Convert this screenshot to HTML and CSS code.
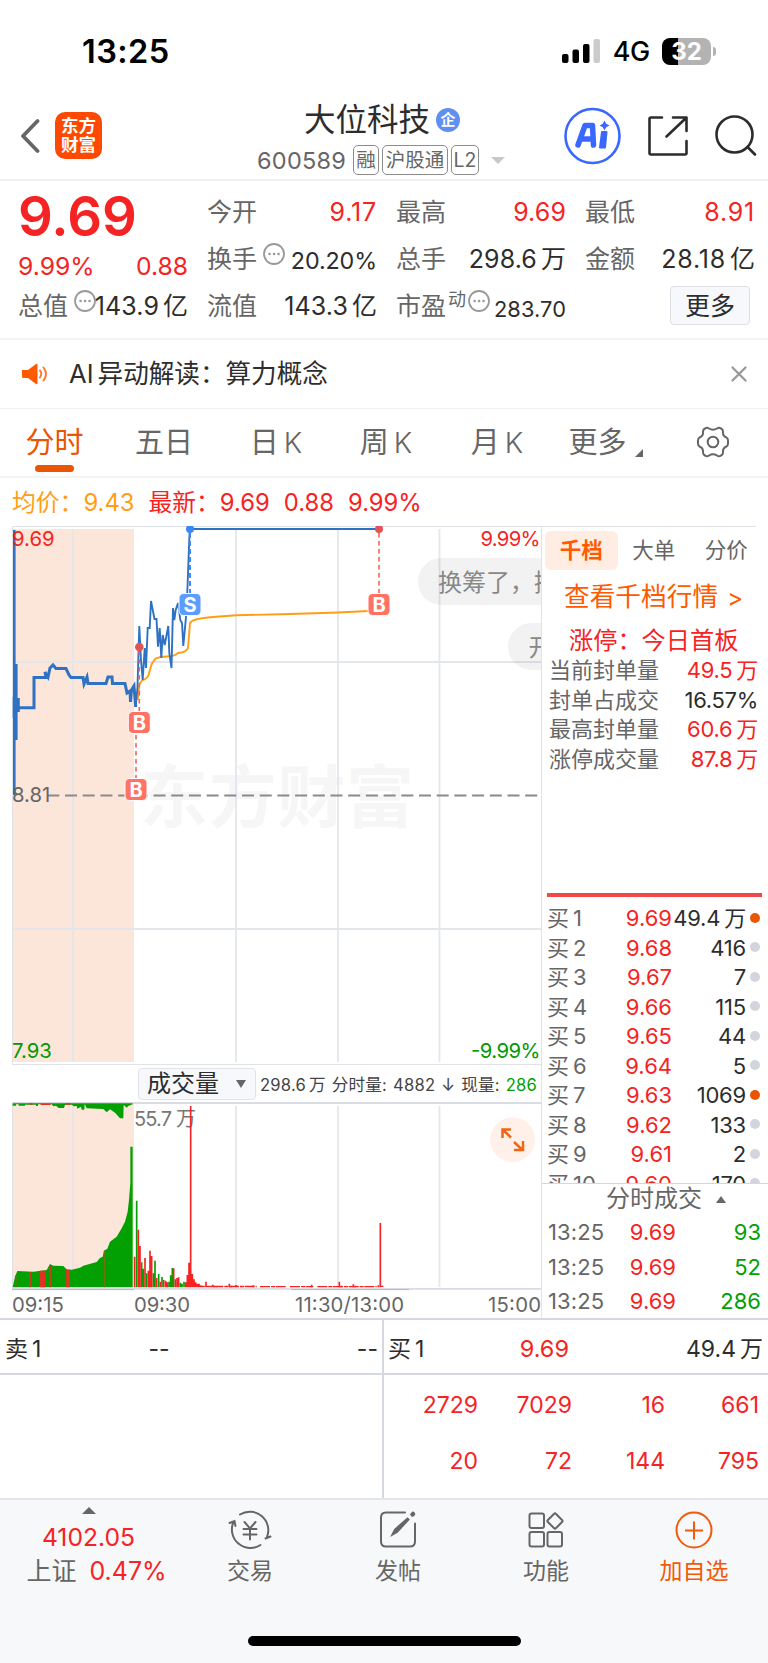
FILE: index.html
```html
<!DOCTYPE html>
<html lang="zh-CN">
<head>
<meta charset="utf-8">
<title>大位科技 600589</title>
<link rel="stylesheet" href="styles.css">
</head>
<body>
<div class="status">
  <div class="clock">13:25</div>
  <div class="status-right">
    <svg width="39" height="25" viewBox="0 0 39 25"><rect x="0" y="15" width="6.5" height="9" rx="2"/><rect x="10.5" y="10.500" width="6.500" height="13.500" rx="2"/><rect x="21" y="5" width="6.500" height="19" rx="2"/><rect x="31.500" y="0" width="6.500" height="24" rx="2" fill="#ccc"/></svg>
    <span class="net">4G</span>
    <div class="battery"><span>32</span></div><i class="battery-cap"></i>
  </div>
</div>
<header class="header">
  <svg class="back" width="20" height="36" viewBox="0 0 20 36"><path d="M17.500 3 3 18 17.500 33" fill="none" stroke="#666" stroke-width="3.800" stroke-linecap="round" stroke-linejoin="round"/></svg>
  <div class="logo"><span>东方</span><span>财富</span></div>
  <div class="title">
    <div class="name">大位科技<b>企</b></div>
    <div class="code"><span>600589</span><em class="t1">融</em><em class="t2">沪股通</em><em class="t3">L2</em><i></i></div>
  </div>
  <svg class="actions" width="204" height="60" viewBox="560 106 204 60" fill="none" stroke="#2c2c2c" stroke-width="2.600" stroke-linecap="round" stroke-linejoin="round">
    <circle cx="592.500" cy="136" r="27" stroke="#3a68ff"/>
    <path d="M578 145 585 125.500H592.500L593.500 145M582 139H593" stroke="#3a68ff" stroke-width="5.500"/>
    <path d="M606.500 132 605 147.500H600L602 132Z" fill="#3a68ff" stroke="#3a68ff" stroke-width="2"/>
    <path d="m604.500 120.500 1.700 3.300 3.300 1.700-3.300 1.700-1.700 3.300-1.700-3.300-3.300-1.700 3.300-1.700Z" fill="#3a68ff" stroke="none"/>
    <path d="M662 117.500H651Q649.500 117.500 649.500 119V153Q649.500 154.500 651 154.500H685Q686.500 154.500 686.500 153V141M666.500 136.500 685.500 118.500M673 117.500H686.500V131"/>
    <circle cx="734.500" cy="134.500" r="18"/><path d="m747.500 147 7.500 7.500"/>
  </svg>
</header>
<section class="quote">
  <div class="col">
    <div class="big">9.69</div>
    <div class="row second"><span class="up">9.99%</span><span class="up">0.88</span></div>
    <div class="row"><label>总值</label><svg class="dots" width="22" height="22" viewBox="0 0 22 22"><circle cx="11" cy="11" r="10"/><path d="M6.500 11h.1M11 11h.1M15.500 11h.1"/></svg><span class="val">143.9<u>亿</u></span></div>
  </div>
  <div class="col">
    <div class="row"><label>今开</label><span class="val up wide">9.17</span></div>
    <div class="row"><label>换手</label><svg class="dots" width="22" height="22" viewBox="0 0 22 22"><circle cx="11" cy="11" r="10"/><path d="M6.500 11h.1M11 11h.1M15.500 11h.1"/></svg><span class="val mid">20.20%</span></div>
    <div class="row"><label>流值</label><span class="val">143.3<u>亿</u></span></div>
  </div>
  <div class="col">
    <div class="row"><label>最高</label><span class="val up">9.69</span></div>
    <div class="row"><label>总手</label><span class="val">298.6<u>万</u></span></div>
    <div class="row"><label>市盈<sup>动</sup></label><svg class="dots pe" width="22" height="22" viewBox="0 0 22 22"><circle cx="11" cy="11" r="10"/><path d="M6.500 11h.1M11 11h.1M15.500 11h.1"/></svg><span class="val small">283.70</span></div>
  </div>
  <div class="col">
    <div class="row"><label>最低</label><span class="val up wide">8.91</span></div>
    <div class="row"><label>金额</label><span class="val wide">28.18<u>亿</u></span></div>
    <div class="row"><button class="more">更多</button></div>
  </div>
</section>
<section class="notice">
  <svg width="26" height="22" viewBox="0 0 26 22"><path d="M0 7h6l8-6q1.500-.8 1.500 1v18q0 1.800-1.500 1l-8-6H1.500Q0 15 0 13.500Z" fill="#ff5a00"/><path d="M18 7.500q2.500 3.500 0 7M21.500 4.500q5 6.500 0 13" fill="none" stroke="#ff7a33" stroke-width="2" stroke-linecap="round"/></svg>
  <span>AI<u>异动解读：算力概念</u></span>
  <svg width="16" height="16" viewBox="0 0 16 16"><path d="m1.500 1.500 13 13m0-13-13 13" stroke="#999" stroke-width="2.300" stroke-linecap="round"/></svg>
</section>
<nav class="tabs">
  <span class="on">分时</span><span>五日</span><span>日<b>K</b></span><span>周<b>K</b></span><span>月<b>K</b></span><span class="last">更多<i></i></span>
  <svg width="34" height="32" viewBox="-17 -16 34 32" fill="none" stroke="#666" stroke-width="2"><circle r="5.300"/><path d="M-8-13.500Q-6-15-4-13.500Q0-11 4-13.500Q6-15 8-13.500Q10-12.500 10-10.500Q9.500-6 13.500-4.500Q15-3.500 15-1.500V1.500Q15 3.500 13.500 4.500Q9.500 6 10 10.500Q10 12.500 8 13.500Q6 15 4 13.500Q0 11-4 13.500Q-6 15-8 13.500Q-10 12.500-10 10.500Q-9.500 6-13.500 4.500Q-15 3.500-15 1.500V-1.500Q-15-3.500-13.500-4.500Q-9.500-6-10-10.500Q-10-12.500-8-13.500Z"/></svg>
</nav>
<div class="info"><span class="avg">均价：9.43</span><span>最新：9.69</span><span>0.88</span><span>9.99%</span></div>
<main class="main">
  <div class="charts">
    <svg class="price" width="541" height="539" viewBox="0 526 541 539">
      <text x="140" y="822" class="mark" textLength="274">东方财富</text>
      <rect x="12" y="529" width="122" height="533" fill="#fce5d9"/>
      <path d="M73 529V1062M236 529V1062M338 529V1062M439.500 529V1062M12 662H541M12 929H541" stroke="#e3e6eb" stroke-width="1.800"/>
      <path d="M12 526.500H541M12.500 526V1065M12 1064.500H541" stroke="#dfe2e7" fill="none"/>
      <path d="M47.300 795.500H538" stroke="#8a8a8a" stroke-width="1.900" stroke-dasharray="12 5.700"/>
      <g fill="#888" fill-opacity=".11"><rect x="418" y="558" width="160" height="47" rx="23.500"/><rect x="508" y="623" width="80" height="47" rx="23.500"/></g>
      <g class="bubble"><text x="438" y="591">换筹了，接</text><text x="528.500" y="656">开</text></g>
      <path d="M137.700 700 139.500 684 142 680.500Q147 679 148.500 675L151.700 664 155.500 658.500Q160 656.500 167 656.500T178 653Q187 652 188 648L190 623Q192 619 208 617.500T236 615.300L290 614 338 612.500 379 610.500" fill="none" stroke="#ff9e14" stroke-width="1.900"/>
      <path d="M14.300 530V795" stroke="#2f72c3" stroke-width="2.600"/>
      <path d="M16.300 664V740M14 697V718M18.500 698V712" stroke="#2f72c3" stroke-width="2.600"/>
      <path d="M18 707.800H34V677.500H46L45 672 48 677 50 668 53 665 56 668.500H66L69 675 71 677.500H83L84 684 87 677 88 683.500H106L108 677H112L112.500 683.500H125L127 693 130 691 130.500 702 131.500 690 134 686 135.700 707" fill="none" stroke="#2f72c3" stroke-width="3"/>
      <path d="M135.700 707 137.500 687 139.300 626 141 660 142.700 680 144.700 648 146 668 147.700 628H149.700L151 601 154.500 619H156.500L158 646.700 159.700 628 161.300 658 162.700 635 164.700 645 168.300 626 169.300 653 171.500 668 173 608 174.300 620 175.700 610 178 603 180.300 620 182 623 183.300 646 186 617 187.500 587 189.700 529H379" fill="none" stroke="#2f72c3" stroke-width="1.900"/>
      <path d="M190 533V594" stroke="#3b86f5" stroke-width="1.900" stroke-dasharray="5 3"/>
      <path d="M379 533V594M139.300 651V712M136 735V780" stroke="#f66258" stroke-width="1.600" stroke-dasharray="4.500 3.500"/>
      <circle cx="190" cy="529" r="4" fill="#3b86f5"/><circle cx="379" cy="529" r="4" fill="#e25453"/><circle cx="139.300" cy="647" r="4.300" fill="#e25453"/>
      <g stroke="#fff" stroke-width="1"><rect x="179" y="593.500" width="22" height="22" rx="4.500" fill="#5b9cff"/><g fill="#ff7264"><rect x="368" y="593.500" width="22" height="22" rx="4.500"/><rect x="128.300" y="711.500" width="22" height="22" rx="4.500"/><rect x="125" y="778.500" width="22" height="22" rx="4.500"/></g></g>
      <g class="flag"><text x="190" y="612">S</text><text x="379" y="612">B</text><text x="139.300" y="730">B</text><text x="136" y="797">B</text></g>
      <g class="axis"><text x="12" y="546" fill="#f52323">9.69</text><text x="480.500" y="546" textLength="60" fill="#f52323">9.99%</text><text x="12" y="801.500" fill="#666">8.81</text><text x="12" y="1057.500" fill="#090">7.93</text><text x="471" y="1057.500" textLength="69.500" fill="#090">-9.99%</text></g>
    </svg>
    <div class="volbar"><button>成交量<i></i></button><p>298.6<u class="gap">万</u> <u>分时量</u>: 4882 ↓ <u>现量</u>: <b>286</b></p></div>
    <svg class="volume" width="541" height="216" viewBox="0 1102 541 216">
      <rect x="12" y="1103" width="122" height="184" fill="#fce5d9"/>
      <path d="M73 1104V1287M236 1106V1287M338 1106V1287M439.500 1106V1287" stroke="#e3e6eb" stroke-width="1.700"/>
      <path d="M12 1103H541M12 1288.800H541" stroke="#d9dce2" stroke-width="1.800"/><path d="M12.500 1103V1288" stroke="#dfe2e7"/>
      <path d="M12 1289.600H134M291 1289.600H409" stroke="#b6b8bd"/>
      <text x="134" y="1125.500" class="cap" textLength="62">55.7 万</text>
      <g transform="translate(0 1040) scale(.333333)">
        <path d="M38 742 45 710 52 693 100 695 140 690 150 672 160 677 190 678 200 688 215 689 240 683 250 677 290 666 300 654 308 650 312 632 322 626 330 605 350 590 365 565 375 545 383 515 387 480 391 430 391 320H398V742ZM38 190V197H48V193H56V197H75V194H108V198H114V193H155L160 199 168 197 176 204H192L195 194H215L222 199 230 198 232 206 243 200 245 209H253L254 192 260 205 310 207 320 217 330 208 345 218 360 235H370L371 195 380 203 385 198 398 193V190Z" fill="#02a002"/>
        <path d="M90 696V742M122 692V742M128 692V742M134 692V742M150 675V742M201 690V742M206 690V742" stroke="#e33122" stroke-width="5"/><path d="M48 705V742M313 632V742" stroke="#856c12" stroke-width="3"/>
        <path d="M88 192H98M122 193H152M195 192H212" stroke="#e33122" stroke-width="4"/>
        <path d="M410 482V742M425 667V742M430 686V742M440 700V742M460 700V742M465 662V742M476 702V742M486 711V742M507 725V742M512 706V742M517 684V742M526 718V742M541 728V742M546 731V742M552 725V742" stroke="#02a002" stroke-width="5"/>
        <path d="M404 650V742M415 569V742M420 618V742M435 654V742M445 692V742M450 632V742M455 648V742M470 714V742M481 725V742M491 720V742M497 722V742M502 727V742M521 685V742M531 714V742M536 712V742M557 727V742M562 705V742M567 668V742M572 198V742M577 702V742M582 718V742M587 727V742M592 731V742M597 731V742M602 736V742M607 737V742M612 737V742M618 725V742M623 737V742M628 737V742M633 737V742M638 734V742M643 737V742M650 738V742M688 731V742M694 737V742M708 735V742M760 736V742M935 734V742M1018 725V742M1024 737V742M1060 733V742M1066 737V742M1141 549V742M1135 736V742" stroke="#f52323" stroke-width="5"/>
        <path d="M640 739.500H770M780 740H860M870 740H940M952 740H1130M1140 739H1150" stroke="#f52323" stroke-width="4" stroke-dasharray="30 3 12 2"/>
      </g>
      <circle cx="512.700" cy="1139.700" r="22.500" fill="#fff0e9"/>
      <path d="M511 1137.500 503 1130M502.500 1138V1129.500H511M514 1142 522 1149.500M523 1141V1150H514" fill="none" stroke="#f06616" stroke-width="2.500"/>
      <g class="axis" fill="#666"><text x="12" y="1312">09:15</text><text x="134" y="1312" textLength="56">09:30</text><text x="295" y="1312" textLength="109">11:30/13:00</text><text x="488" y="1312" textLength="53">15:00</text></g>
    </svg>
  </div>
  <aside class="panel">
    <div class="ptabs"><span class="on">千档</span><span>大单</span><span>分价</span></div>
    <div class="link">查看千档行情<span>&gt;</span></div>
    <div class="limit">涨停：今日首板</div>
    <div class="stats">
      <div><label>当前封单量</label><span class="up">49.5<u>万</u></span></div>
      <div><label>封单占成交</label><span class="pct">16.57%</span></div>
      <div><label>最高封单量</label><span class="up">60.6<u>万</u></span></div>
      <div><label>涨停成交量</label><span class="up">87.8<u>万</u></span></div>
    </div>
    <div class="bids">
      <div><label>买<u>1</u></label><b>9.69</b><span>49.4<u>万</u></span><i class="hot"></i></div>
      <div><label>买<u>2</u></label><b>9.68</b><span>416</span><i></i></div>
      <div><label>买<u>3</u></label><b>9.67</b><span>7</span><i></i></div>
      <div><label>买<u>4</u></label><b>9.66</b><span>115</span><i></i></div>
      <div><label>买<u>5</u></label><b>9.65</b><span>44</span><i></i></div>
      <div><label>买<u>6</u></label><b>9.64</b><span>5</span><i></i></div>
      <div><label>买<u>7</u></label><b>9.63</b><span>1069</span><i class="hot"></i></div>
      <div><label>买<u>8</u></label><b>9.62</b><span>133</span><i></i></div>
      <div><label>买<u>9</u></label><b>9.61</b><span>2</span><i></i></div>
      <div><label>买<u>10</u></label><b>9.60</b><span>170</span><i></i></div>
    </div>
    <div class="deals-head">分时成交<i></i></div>
    <div class="deals">
      <div><label>13:25</label><b>9.69</b><span>93</span></div>
      <div><label>13:25</label><b>9.69</b><span>52</span></div>
      <div><label>13:25</label><b>9.69</b><span>286</span></div>
    </div>
  </aside>
</main>
<section class="book">
  <div class="side"><div class="top"><span>卖<u>1</u></span><span>--</span><span>--</span></div></div>
  <div class="side buy"><div class="top"><span>买<u>1</u></span><span class="up">9.69</span><span>49.4<u>万</u></span></div>
    <div class="queue"><span>2729</span><span>7029</span><span>16</span><span>661</span><span>20</span><span>72</span><span>144</span><span>795</span></div>
  </div>
</section>
<footer class="dock">
  <div class="items">
    <div class="index"><i></i><b>4102.05</b><span>上证 <b>0.47%</b></span></div>
    <div><svg width="44" height="40" viewBox="-22 -20 44 40" fill="none" stroke="#666" stroke-width="2" stroke-linecap="round"><path d="M-10-15.500A18.500 18.500 0 0 1 17 7M10.500 15A18.500 18.500 0 0 1-16.500-8M-20.500-7-15.500-9-14.500-4M20.500 6.500 15.500 8.500M-5.500-8 0-1.500 5.500-8M-6.500-1H6.500M-6.500 4.500H6.500M0-1V9.500"/></svg><span>交易</span></div>
    <div><svg width="40" height="40" viewBox="-20 -20 40 40" fill="none" stroke="#666" stroke-width="2" stroke-linecap="round"><path d="M7-17.500H-12Q-17-17.500-17-12.500V11.500Q-17 16.500-12 16.500H12Q17 16.500 17 11.500V-6.500"/><path d="M-5.500 4.500-3-.5 9.500-11.500 10.500-10.500-1 2Z" fill="#666"/><path d="m14.500-15.500.5-.5" stroke-width="4.500"/></svg><span>发帖</span></div>
    <div><svg width="40" height="40" viewBox="-20 -20 40 40" fill="none" stroke="#666" stroke-width="2"><rect x="-16.500" y="-16.500" width="14.500" height="14.500" rx="2"/><rect x="-16.500" y="2" width="14.500" height="14.500" rx="2"/><rect x="1.500" y="2" width="14.500" height="14.500" rx="2"/><rect x="3.200" y="-14.800" width="11.500" height="11.500" rx="1.500" transform="rotate(45 8.900 -9)"/></svg><span>功能</span></div>
    <div class="add"><svg width="40" height="40" viewBox="-20 -20 40 40" fill="none" stroke="#f15a0a" stroke-width="2"><circle r="17.500"/><path d="M-9 .5H9M0-8.500V9.500"/></svg><span>加自选</span></div>
  </div>
  <div class="home"></div>
</footer>
</body>
</html>
```
FILE: styles.css
```css
* { box-sizing: border-box; }
body { margin: 0; width: 768px; background: #fff; color: #2d2d2d; font-family: Inter, "Noto Sans CJK SC", sans-serif; font-weight: 400; overflow-x: hidden; }
u { text-decoration: none; }
em, i { font-style: normal; }
b { font-weight: 400; }
button { font: inherit; color: inherit; padding: 0; }
svg { display: block; flex: none; }
.up { color: #f52323; }

.status { height: 95px; padding: 32px 52px 0 82px; display: flex; justify-content: space-between; color: #000; }
.clock { font-size: 32.5px; font-weight: 600; line-height: 40px; letter-spacing: .4px; }
.status-right { display: flex; align-items: center; height: 38px; }
.net { font-size: 27px; font-weight: 450; margin: 2px 12px 0 12px; line-height: 36px; letter-spacing: -.3px; }
.battery { width: 49px; height: 27px; border-radius: 8px; background: linear-gradient(90deg, #000 32%, #b3b3b3 32%); color: #fff; font-size: 24px; font-weight: 700; line-height: 27px; text-align: center; }
.battery-cap { width: 3px; height: 9px; border-radius: 0 4px 4px 0; background: #b3b3b3; margin-left: 2px; }

.header { height: 86px; border-bottom: 2px solid #f0f0f1; display: grid; grid-template-columns: 55px 47px 1fr 208px; }
.back { margin: 23px 0 0 20px; }
.logo { width: 47px; height: 47px; margin-top: 17px; border-radius: 10px; background: #ff4800; color: #fff; font-size: 17.5px; font-weight: 700; display: flex; flex-direction: column; align-items: center; justify-content: center; line-height: 18.5px; }
.title { display: flex; flex-direction: column; padding-left: 155px; }
.name { margin: 4px 0 0 47px; height: 42px; font-size: 31.5px; line-height: 42px; display: flex; align-items: center; white-space: nowrap; }
.name b { width: 24px; height: 24px; border-radius: 50%; background: #5f8ff0; color: #fff; font-size: 15px; font-weight: 700; line-height: 23px; text-align: center; margin-left: 6px; }
.code { height: 30px; margin-top: 4px; display: flex; align-items: center; color: #666; font-size: 23.5px; white-space: nowrap; }
.code span { width: 96px; letter-spacing: .25px; }
.code em { height: 30px; border: 1px solid #8c8c8c; border-radius: 5px; font-size: 19.500px; line-height: 28px; text-align: center; margin-right: 3px; }
.code .t1 { width: 26px; } .code .t2 { width: 66px; } .code .t3 { width: 28px; }
.code i { border: 7px solid transparent; border-top-color: #c8c8c8; border-bottom: 0; margin-left: 9px; }
.actions { margin-top: 11px; }

.quote { height: 159px; border-bottom: 2px solid #f3f3f4; padding: 8px 12px 0 18px; display: grid; grid-template-columns: repeat(4, 170px); column-gap: 19px; font-size: 25px; }
.row { height: 47px; display: flex; align-items: center; line-height: 47px; white-space: nowrap; }
.row label { color: #666; }
.val { margin-left: auto; letter-spacing: .1px; }
.wide { letter-spacing: .8px; }
.val u { margin-left: 4px; letter-spacing: 0; }
.big { font-size: 54.5px; line-height: 54px; height: 54px; font-weight: 600; color: #f52323; }
.second { height: 40px; line-height: 40px; justify-content: space-between; padding-top: 6px; font-size: 24.7px; }
.mid { font-size: 23.3px; padding-top: 2px; letter-spacing: -.1px; }
.small { font-size: 21.8px; padding-top: 5px; }
.dots { margin: -12px -30px 0 6px; fill: none; stroke: #999; stroke-width: 1.800; }
.dots path { stroke-width: 2.500; stroke-linecap: round; }
.dots.pe { margin-left: 2px; }
.row sup { font-size: 18px; vertical-align: 9px; line-height: 0; margin-left: 2px; }
.more { width: 80px; height: 39px; margin: -2px 5px 0 auto; border: 1px solid #dddfe5; border-radius: 4px; background: #f7f8fb; line-height: 36px; }

.notice { height: 69px; border-bottom: 1px solid #f0f0f1; padding: 0 21px 1px 22px; display: flex; align-items: center; font-size: 25.6px; }
.notice span { margin: 0 auto 0 21px; line-height: 40px; }
.notice u { margin-left: 4px; }

.tabs { height: 69px; border-bottom: 2px solid #f3f3f4; padding-right: 17px; display: grid; grid-template-columns: 109px 110px 114px 106px 116px 85px 1fr; justify-items: center; font-size: 29px; line-height: 67px; color: #666; }
.tabs span { display: flex; position: relative; white-space: nowrap; }
.tabs b { margin-left: 5px; font-weight: 350; font-size: 28.5px; }
.tabs .on { color: #ea5504; }
.tabs .on::after { content: ""; position: absolute; left: 10px; top: 56px; width: 39px; height: 7px; border-radius: 4px; background: #ea5504; }
.tabs .last i { position: absolute; left: 67px; top: 40px; border-left: 8px solid transparent; border-bottom: 8px solid #666; }
.tabs svg { margin: 17px 0 0 35px; }

.info { height: 48px; padding: 0 12px; display: flex; gap: 14px; font-size: 23.8px; line-height: 50px; color: #f52323; white-space: nowrap; }
.info .avg { color: #ff9e14; }

.main { height: 792px; display: grid; grid-template-columns: 541px 227px; }
.charts { height: 792px; overflow: hidden; }
.price text { font-family: Inter, "Noto Sans CJK SC", sans-serif; }
.mark { font-size: 68px; font-weight: 700; fill: #f6f6f7; }
.bubble { font-size: 24px; fill: #888; }
.axis { font-size: 20.3px; }
.cap { font-size: 20px; fill: #777; }
.flag { font-size: 20px; font-weight: 700; fill: #fff; text-anchor: middle; }
.volbar { height: 37px; padding-left: 138px; display: flex; align-items: center; }
.volbar button { width: 118px; height: 32px; border: 1px solid #e1e3e9; border-radius: 4px; background: #f7f8fb; font-size: 24px; line-height: 30px; display: flex; align-items: center; padding: 0 9px 0 8px; justify-content: space-between; }
.volbar i { border: 5px solid transparent; border-top: 8px solid #666; border-bottom: 0; }
.volbar p { margin: 0 0 0 4px; font-size: 16.6px; color: #444; white-space: nowrap; letter-spacing: .2px; word-spacing: 1.1px; }
.volbar .gap { margin-left: 3px; }
.volbar b { color: #02a002; }

.panel { border-left: 1px solid #dfe2e7; position: relative; height: 792px; white-space: nowrap; }
.panel::before { content: ""; position: absolute; left: 0; top: 0; width: 214px; height: 1px; background: #dfe2e7; }
.ptabs { margin: 5px 0 0 3px; height: 39px; display: flex; font-size: 21.5px; line-height: 38px; color: #666; }
.ptabs span { width: 72.5px; text-align: center; }
.ptabs .on { background: #ffede4; color: #ff5a00; font-weight: 700; border-radius: 6px; }
.link { height: 52px; line-height: 53px; padding-left: 22px; color: #ff5a00; font-size: 25.7px; }
.link span { margin-left: 9px; font-size: 24px; }
.limit { height: 34px; line-height: 37px; padding-left: 27px; color: #f52323; font-size: 24.2px; }
.stats { padding: 0 10px 0 7px; height: 236px; font-size: 22px; }
.stats div { height: 29.500px; line-height: 29px; display: flex; justify-content: space-between; }
.stats label { color: #666; }
.stats .up { letter-spacing: -.3px; }
.stats .pct { letter-spacing: -.3px; }
.stats u, .bids span u { margin-left: 4px; }
.bids { height: 291px; margin-left: 5px; padding-top: 11px; overflow: hidden; position: relative; font-size: 22px; }
.bids::before { content: ""; position: absolute; top: 1px; left: 0; width: 215px; height: 4px; background: #f04848; }
.bids div { height: 29.500px; line-height: 30px; display: grid; grid-template-columns: 60px 65px 74px 14px; align-items: center; }
.bids label, .deals label { color: #666; }
.bids label u { margin-left: 4px; }
.bids b, .deals b { color: #f52323; text-align: right; }
.bids span, .deals span { text-align: right; }
.bids span { letter-spacing: -.2px; }
.bids b { padding-right: 0; }
.bids i { width: 10px; height: 10px; border-radius: 50%; background: #d2d5db; margin: -1px 0 0 4px; }
.bids i.hot { background: #ea5504; }
.deals-head { height: 31px; border-top: 1px solid #d5d7dc; display: flex; align-items: center; justify-content: center; padding-left: 22px; color: #666; font-size: 24px; line-height: 30px; }
.deals-head i { margin-left: 14px; border: 5.5px solid transparent; border-bottom: 7px solid #666; border-top: 0; }
.deals { font-size: 22px; padding-top: 1px; }
.deals div { height: 34.600px; line-height: 35px; display: grid; grid-template-columns: 60px 68px 85px; padding-left: 6px; }
.deals label { letter-spacing: .1px; }
.deals span { color: #02a002; }

.book { height: 180px; display: grid; grid-template-columns: 382px 386px; border-top: 2px solid #d5d8de; font-size: 23px; }
.top { height: 55px; line-height: 58px; border-bottom: 2px solid #d5d8de; display: grid; grid-template-columns: 103px 102px 1fr; padding: 0 4px 0 5px; }
.top span:nth-child(2) { text-align: center; }
.top span:last-child { text-align: right; }
.top u { margin-left: 4px; }
.buy { border-left: 2px solid #d5d8de; }
.buy .top { grid-template-columns: 83px 98px 1fr; padding: 0 5px 0 4px; }
.buy .top span:nth-child(2) { text-align: right; font-size: 23.5px; }
.queue { display: grid; grid-template-columns: 94px 94px 93px 94px; grid-auto-rows: 56px; line-height: 60px; text-align: right; color: #f52323; }

.dock { height: 165px; background: #f7f8fa; border-top: 2px solid #e3e5e9; color: #666; }
.items { display: grid; grid-template-columns: 176px repeat(4, 148px); height: 136px; }
.items > div { display: flex; flex-direction: column; align-items: center; font-size: 23px; padding-top: 10px; }
.items span { line-height: 34px; margin-top: 4px; white-space: nowrap; }
.items .index { padding-top: 7px; font-size: 25px; padding-left: 1px; }
.index i { border: 7px solid transparent; border-top: 0; border-bottom-color: #666; }
.index > b { line-height: 34px; margin-top: 6px; font-size: 24.7px; }
.index span { margin-top: 0; padding-left: 16px; }
.index b { color: #f52323; }
.index span b { margin-left: 6px; }
.add { color: #f15a0a; }
.home { width: 273px; height: 10px; border-radius: 5px; background: #000; margin-left: 248px; }
```
